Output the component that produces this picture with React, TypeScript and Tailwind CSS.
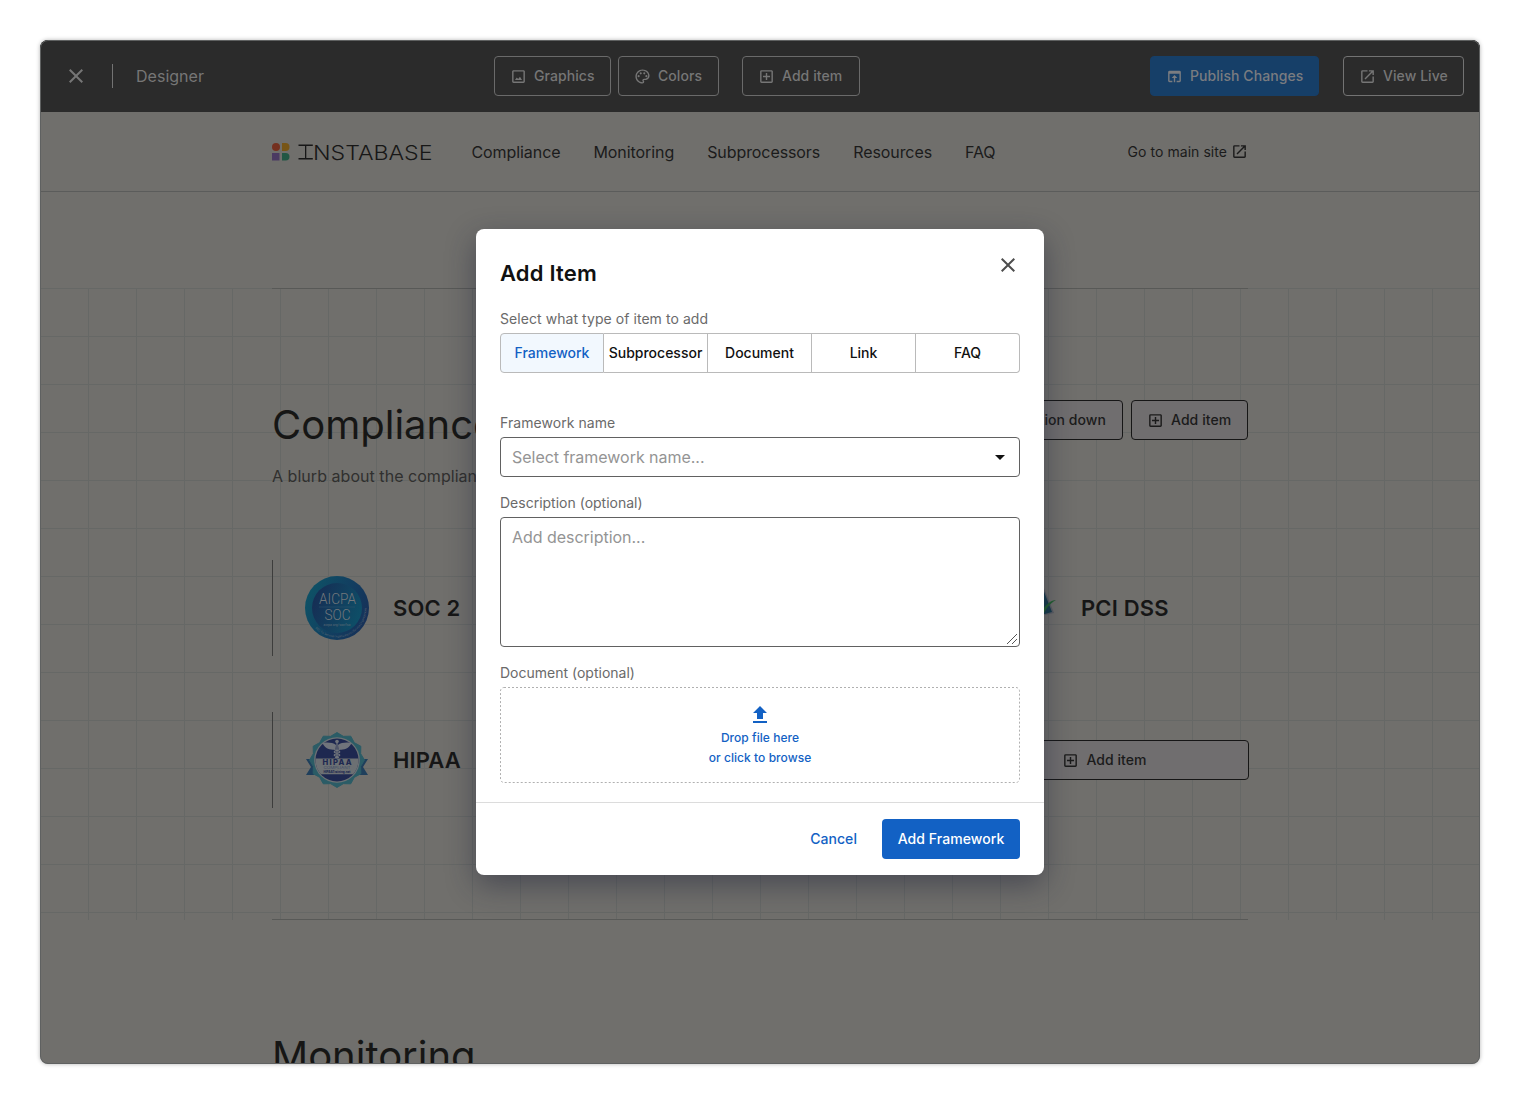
import React from "react";
import {
  MdArrowDropDown,
  MdClose,
  MdFileUpload,
  MdOpenInBrowser,
  MdOpenInNew,
  MdOutlineAddBox,
  MdOutlinePalette,
} from "react-icons/md";

function GraphicsIcon() {
  return (
    <svg viewBox="0 0 24 24" className="size-[17px] shrink-0" fill="currentColor">
      <path d="M19 5v14H5V5h14m0-2H5c-1.1 0-2 .9-2 2v14c0 1.1.9 2 2 2h14c1.1 0 2-.9 2-2V5c0-1.1-.9-2-2-2z" />
      <path d="M14.1 12.2l-2.6 3.4-1.9-2.2L7 17h10z" />
    </svg>
  );
}

function ToolButton({ icon, label, className = "" }: { icon: React.ReactNode; label: string; className?: string }) {
  return (
    <button
      className={`flex h-10 shrink-0 items-center gap-[7px] whitespace-nowrap rounded border pl-[15px] text-sm font-medium tracking-[0.07px] ${className}`}
    >
      {icon}
      <span>{label}</span>
    </button>
  );
}

function Toolbar() {
  return (
    <header className="grid h-[72px] grid-cols-[454px_1fr_auto] items-center bg-[#2b2b2b] pr-4 text-[#767676]">
      <div className="flex items-center">
        <MdClose className="ml-6 size-6" />
        <div className="ml-6 h-6 w-px bg-[#737373]" />
        <span className="ml-[23px] text-base tracking-[0.02px]">Designer</span>
      </div>
      <div className="flex">
        <ToolButton className="w-[117px] border-[#6a6a6a]" icon={<GraphicsIcon />} label="Graphics" />
        <ToolButton
          className="ml-[7px] w-[101px] border-[#6a6a6a]"
          icon={<MdOutlinePalette className="size-[17px] shrink-0" />}
          label="Colors"
        />
        <ToolButton
          className="ml-[23px] w-[118px] border-[#6a6a6a]"
          icon={<MdOutlineAddBox className="size-[17px] shrink-0" />}
          label="Add item"
        />
      </div>
      <div className="flex gap-6">
        <ToolButton
          className="w-[169px] border-[#163f68] bg-[#163f68] text-[#7a7c80]"
          icon={<MdOpenInBrowser className="size-[17px] shrink-0" />}
          label="Publish Changes"
        />
        <ToolButton
          className="w-[121px] border-[#737373]"
          icon={<MdOpenInNew className="size-[17px] shrink-0" />}
          label="View Live"
        />
      </div>
    </header>
  );
}

function Logo() {
  return (
    <svg width="162" height="20" viewBox="0 0 162 20" className="overflow-visible">
      <circle cx="4" cy="5" r="4" fill="#74301f" />
      <path d="M10 1h3.5a4 4 0 0 1 0 8H10z" fill="#775516" />
      <path d="M0 11h7.5v7.5H0z" fill="#4b3a62" />
      <path d="M10 11h3.7a3.75 3.75 0 0 1 0 7.5H10z" fill="#225744" />
      <g fill="#171717">
        <path d="M26.5 2.6h14.3v1.3h-6.500v12.200h6.500v1.300H26.500v-1.300H33V3.900h-6.500z" />
        <text x="41" y="17.500" fontFamily="Inter" fontWeight="300" fontSize="20.500" textLength="119.500" lengthAdjust="spacingAndGlyphs">
          NSTABASE
        </text>
      </g>
    </svg>
  );
}

function SiteNav() {
  return (
    <nav className="flex h-20 items-center border-b border-[#5b5c5b] pl-[232px] pr-[232px] text-[#1b1b1b]">
      <Logo />
      <ul className="ml-[37.5px] flex gap-[33px] text-base tracking-[-0.08px]">
        {["Compliance", "Monitoring", "Subprocessors", "Resources", "FAQ"].map((item) => (
          <li key={item}>{item}</li>
        ))}
      </ul>
      <a className="ml-auto flex items-center gap-1 text-sm tracking-[0.05px]">
        Go to main site
        <MdOpenInNew className="size-[17px]" />
      </a>
    </nav>
  );
}

function SocBadge() {
  return (
    <svg viewBox="0 0 64 64" className="size-16 overflow-visible">
      <defs>
        <linearGradient id="socOuter" x1="0" y1="0.3" x2="1" y2="0.7">
          <stop offset="0" stopColor="#0e5266" />
          <stop offset="0.6" stopColor="#123d60" />
          <stop offset="1" stopColor="#173057" />
        </linearGradient>
        <linearGradient id="socInner" x1="0" y1="0.3" x2="1" y2="0.7">
          <stop offset="0" stopColor="#162d54" />
          <stop offset="1" stopColor="#0d5068" />
        </linearGradient>
        <path id="socArc" d="M10.400 52.100 A29.500 29.500 0 0 0 60 22.900" />
      </defs>
      <circle cx="32" cy="32" r="32" fill="url(#socOuter)" />
      <circle cx="32" cy="32" r="25" fill="url(#socInner)" />
      <g fill="#73777b" fontFamily="Roboto" fontWeight="300" textAnchor="middle">
        <text x="32.500" y="28" fontSize="15" textLength="37" lengthAdjust="spacingAndGlyphs">AICPA</text>
        <text x="32.500" y="44" fontSize="15" textLength="26" lengthAdjust="spacingAndGlyphs">SOC</text>
        <text x="32" y="50" fontSize="3" textLength="27" lengthAdjust="spacingAndGlyphs">aicpa.org/soc4so</text>
        <text fontSize="3" textAnchor="start">
          <textPath href="#socArc">SOC for Service Organizations | Service Organizations</textPath>
        </text>
      </g>
      <path d="M14 31h36" stroke="#31566e" strokeWidth="0.5" />
    </svg>
  );
}

const SEAL_POINTS = Array.from({ length: 24 }, (_, i) => {
  const radius = i % 2 === 0 ? 27.5 : 24.5;
  const angle = (i * Math.PI) / 12 - Math.PI / 2;
  return `${32 + radius * Math.cos(angle)},${32 + radius * Math.sin(angle)}`;
}).join(" ");

function HipaaBadge() {
  return (
    <svg viewBox="0 0 64 64" className="size-16 overflow-visible">
      <defs>
        <clipPath id="hipaaDisc">
          <circle cx="32" cy="32" r="21.500" />
        </clipPath>
      </defs>
      <path d="M1 31h18v16H1l5-8zM63 31H45v16h18l-5-8z" fill="#1f3f5c" />
      <polygon points={SEAL_POINTS} fill="#2b5c66" stroke="#2b5c66" strokeWidth="1" strokeLinejoin="round" />
      <circle cx="32" cy="32" r="22.800" fill="#6c7174" />
      <g clipPath="url(#hipaaDisc)">
        <path d="M8 8h48v48H8z" fill="#1e2850" />
        <path d="M8 30.500h48v15.800H8z" fill="#6c7073" />
      </g>
      <g fill="#70747b">
        <circle cx="32" cy="13.500" r="1.800" />
        <path d="M31 17c-3-2.500-9-3-13.500-2 2 5 7 7.500 13 6.500zM33 17c3-2.500 9-3 13.500-2-2 5-7 7.500-13 6.500z" />
      </g>
      <path d="M32 15v15.500M29 21.500c7 2 7 2.500 3 4s-4 2 2 4M35 21.500c-7 2-7 2.500-3 4s4 2-2 4" fill="none" stroke="#70747b" strokeWidth="1.200" />
      <g textAnchor="middle" fontFamily="Inter" fill="#1e2850">
        <text x="32" y="37.300" fontSize="7.600" fontWeight="800" textLength="29">HIPAA</text>
        <text x="32" y="41" fontSize="3.700" fill="#414c68" textLength="27" lengthAdjust="spacingAndGlyphs">COMPLIANT</text>
        <text x="32" y="45" fontSize="3.400" fontWeight="800" textLength="27" lengthAdjust="spacingAndGlyphs">HIPAATraining.net</text>
      </g>
    </svg>
  );
}

function PciBadge() {
  return (
    <svg viewBox="0 0 64 64" className="size-16">
      <path d="M48 5l13 32-9 2-8-8z" fill="#5a5d63" />
      <path d="M46 3l13 33-11 3z" fill="#153b4b" />
      <path d="M42 31l8 8c3-6 6-11 13-15-5 0-9 4-13 9z" fill="#22602f" />
    </svg>
  );
}

function Framework({ icon, label }: { icon: React.ReactNode; label: string }) {
  return (
    <div className="flex h-24 items-center border-l border-[#3d3d3c] pl-8">
      {icon}
      <span className="ml-6 text-[22px] font-semibold tracking-[0.15px] text-[#161616]">{label}</span>
    </div>
  );
}

function ComplianceSection() {
  return (
    <section className="h-[632px] bg-[linear-gradient(to_right,#666866_1px,transparent_1px),linear-gradient(to_bottom,#666866_1px,transparent_1px)] bg-[size:48px_48px]">
      <div className="mx-auto h-full w-[976px] border-b border-t border-[#585957] pt-[110px]">
        <div className="flex items-start justify-between">
          <div>
            <h1 className="text-[40px] leading-[52px] text-[#161615]">Compliance</h1>
            <p className="mt-[13px] text-base tracking-[0.04px] text-[#30302f]">A blurb about the compliance</p>
          </div>
          <div className="mt-px flex gap-2">
            <ToolButton
              className="border-[#161616] bg-[#706e6f] pr-4 text-[#1b1b1b]"
              icon={null}
              label="Move section down"
            />
            <ToolButton
              className="w-[117px] border-[#161616] bg-[#706e6f] text-[#1b1b1b]"
              icon={<MdOutlineAddBox className="size-[17px] shrink-0" />}
              label="Add item"
            />
          </div>
        </div>
        <div className="mt-[72px] grid grid-cols-[344px_344px_289px] gap-y-14">
          <Framework icon={<SocBadge />} label="SOC 2" />
          <div />
          <Framework icon={<PciBadge />} label="PCI DSS" />
          <Framework icon={<HipaaBadge />} label="HIPAA" />
          <div />
          <ToolButton
            className="mt-7 w-[289px] justify-center border-[#161616] bg-[#706e6f] pr-[15px] text-[#1b1b1b]"
            icon={<MdOutlineAddBox className="size-[17px] shrink-0" />}
            label="Add item"
          />
        </div>
      </div>
    </section>
  );
}

function AddItemDialog() {
  return (
    <div
      role="dialog"
      className="absolute left-1/2 top-[189px] h-[646px] w-[568px] -translate-x-1/2 rounded-lg bg-white shadow-[0_10px_30px_rgba(30,33,55,0.48)]"
    >
      <div className="px-6 pt-6">
        <div className="flex h-10 justify-between">
          <h2 className="text-[22px] font-semibold leading-10 tracking-[0.2px] text-[#111]">Add Item</h2>
          <MdClose className="size-6 text-[#4d4d4d]" />
        </div>
        <div className="mt-4 text-sm leading-5 tracking-[0.06px] text-[#6a6a6a]">Select what type of item to add</div>
        <div className="mt-1 grid h-10 grid-cols-5 text-sm font-medium text-[#111]">
          {["Framework", "Subprocessor", "Document", "Link", "FAQ"].map((tab, i) => (
            <button
              key={tab}
              className={`border-y border-r border-[#bababa] first:rounded-l first:border-l last:rounded-r ${
                i === 0 ? "bg-[#f2f8fe] text-[#1261c4]" : ""
              }`}
            >
              {tab}
            </button>
          ))}
        </div>
        <div className="mt-10 text-sm leading-5 tracking-[0.06px] text-[#6a6a6a]">Framework name</div>
        <div className="mt-1 flex h-10 items-center justify-between rounded border border-[#616161] pl-[11px] pr-[7px] text-base tracking-[-0.03px] text-[#949494]">
          Select framework name...
          <MdArrowDropDown className="size-6 text-[#111]" />
        </div>
        <div className="mt-4 text-sm leading-5 text-[#6a6a6a]">Description (optional)</div>
        <div className="mt-1 flex h-[130px] justify-between rounded border border-[#616161] pl-[11px] pt-[7px] text-base tracking-[-0.03px] text-[#949494]">
          Add description...
          <svg viewBox="0 0 12 12" className="mb-px mr-px size-3 self-end" stroke="#555" fill="none">
            <path d="M1 11L11 1M6 11l5-5" />
          </svg>
        </div>
        <div className="mt-4 text-sm leading-5 text-[#6a6a6a]">Document (optional)</div>
        <div className="relative mt-1 flex h-24 flex-col items-center pt-4 text-xs font-medium leading-5 tracking-[0.05px] text-[#1261c4]">
          <svg className="absolute inset-0 size-full" fill="none">
            <rect x="0.5" y="0.5" width="519" height="95" rx="3.500" stroke="#b0b0b0" strokeDasharray="2 2" />
          </svg>
          <MdFileUpload className="size-6" />
          <span className="mt-px">Drop file here</span>
          <span>or click to browse</span>
        </div>
      </div>
      <footer className="mt-[19px] flex h-[73px] items-center justify-end border-t border-[#dcdcdc] pr-6 text-sm font-medium tracking-[0.06px]">
        <button className="mr-[25px] text-[#1261c4]">Cancel</button>
        <button className="h-10 w-[138px] rounded bg-[#1261c4] text-white">Add Framework</button>
      </footer>
    </div>
  );
}

export default function App() {
  return (
    <div className="h-[1104px] w-[1520px] bg-white p-10 font-['Inter',sans-serif] antialiased">
      <div className="relative h-[1024px] overflow-hidden rounded-lg bg-[#706f6c] shadow-[0_0_4px_rgba(0,0,0,0.3)]">
        <Toolbar />
        <SiteNav />
        <div className="h-24" />
        <ComplianceSection />
        <h1 className="ml-[232px] mt-[110px] text-[40px] leading-[52px] text-[#161615]">Monitoring</h1>
        <AddItemDialog />
        <div className="pointer-events-none absolute inset-0 rounded-lg border border-[#5f6161]" />
      </div>
    </div>
  );
}
